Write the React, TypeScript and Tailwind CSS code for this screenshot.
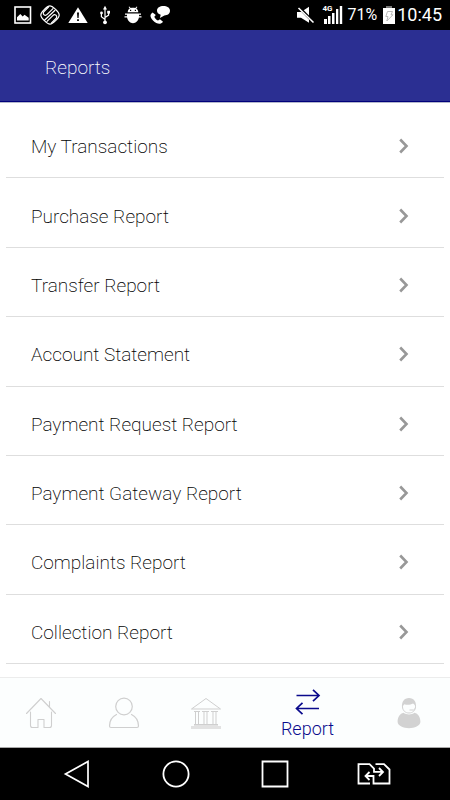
import React, { useState } from 'react';

const reports = [
  'My Transactions',
  'Purchase Report',
  'Transfer Report',
  'Account Statement',
  'Payment Request Report',
  'Payment Gateway Report',
  'Complaints Report',
  'Collection Report',
];

const StatusBar = () => (
  <div className="flex h-[30px] items-center justify-between bg-black pr-2 pl-[14px] text-white">
    <div className="flex items-center">
      {/* Gallery */}
      <svg width="18" height="20" viewBox="0 0 18 20" fill="none">
        <rect x="1" y="2" width="15.5" height="16" stroke="#fff" strokeWidth="1.6" />
        <path d="M3 15.5v-3.2L6.3 9l2.4 2.6 1.8-1.8 4.2 3v2.7z" fill="#fff" />
      </svg>
      {/* Knot badge */}
      <svg className="ml-2" width="20" height="20" viewBox="0 0 20 20" fill="none" stroke="#fff" strokeWidth="1.2" strokeLinecap="round">
        <path d="M10 .8c2.200 0 3.500 1.600 5.600 3.600S19.200 7.800 19.200 10s-1.600 3.700-3.600 5.700-3.400 3.500-5.600 3.500-3.600-1.500-5.600-3.500S.8 12.200.8 10s1.600-3.600 3.600-5.600S7.800.8 10 .8z" />
        <path d="M8.500 2 4 6.500c-1.300 1.300-.8 3.300.7 3.700 1 .3 1.700 0 2.500-.8L13 3.600M14.800 5.500 4.500 15.300M11.500 18l4.500-4.500c1.300-1.300.8-3.300-.7-3.700-1-.3-1.700 0-2.500.8L7 16.400" />
      </svg>
      {/* Warning */}
      <svg className="ml-2" width="20" height="20" viewBox="0 0 20 20">
        <path d="M10 2.300 19.700 18H.3z" fill="#fff" />
        <path d="M9 7.500h2l-.4 5.500H9.400zM9.100 14.200h1.800V16H9.100z" fill="#000" />
      </svg>
      {/* USB */}
      <svg className="ml-3" width="10" height="20" viewBox="0 0 10 20" fill="none" stroke="#fff" strokeWidth="1.200">
        <path d="M5 4v13M5 14.500 1.400 11.800V8.500M5 12.500l3.600-2.400V7.500" />
        <path d="m5 .8 2 3.700H3z" fill="#fff" stroke="none" />
        <circle cx="5" cy="17.300" r="1.900" fill="#fff" stroke="none" />
        <circle cx="1.500" cy="8" r="1.400" fill="#fff" stroke="none" />
        <path d="M7.200 5.800H10v2.800H7.200z" fill="#fff" stroke="none" />
      </svg>
      {/* Debugging */}
      <svg className="ml-[14px]" width="18" height="20" viewBox="0 0 18 20" fill="#fff">
        <path d="M3.700 7.200c.1-1.900 1-3.100 2.100-3.700L4.600 2l.7-.5 1.400 1.600c1.400-.5 3.200-.5 4.600 0l1.400-1.600.7.5-1.200 1.500c1.200.7 2 1.900 2.100 3.700z" />
        <path d="M1 8.500h16v1.300h-2v1.500h2.500v1.200h-2.600c-.6 3.300-3 5.700-5.900 5.700s-5.300-2.400-5.900-5.700H.5v-1.200H3V9.800H1z" />
        <path d="M6 4.800h1.200V6H6zM10.800 4.800H12V6h-1.200z" fill="#000" />
      </svg>
      {/* Call message */}
      <svg className="ml-2" width="20" height="20" viewBox="0 0 20 20" fill="#fff">
        <path d="M2.600 7.500 1.200 8.700C-.3 10.500.6 13 3 15.400S8 19 10 18.700c1.200-.2 2.300-1 3-1.900L10 14.200l-2 1.300c-1.600-.7-3-2.200-3.700-3.800l1.500-1.600z" />
        <path d="M13.400 1C17 1 20 2.600 20 5.700s-2.500 4.500-5.600 4.700L9.900 13l.8-3.300C8.300 9 7 7.700 7 5.700 7 2.600 9.900 1 13.400 1z" />
      </svg>
    </div>

    <div className="flex items-center">
      {/* Muted */}
      <svg width="18" height="20" viewBox="0 0 18 20">
        <path d="M0 7h4l8-5.200v16L4 12.800H0z" fill="#fff" />
        <path d="m1 1.500 16 16" stroke="#000" strokeWidth="3" />
        <path d="m1.500 3 15 14.500" stroke="#fff" strokeWidth="1.600" />
      </svg>
      {/* Signal */}
      <div className="relative ml-2 h-5 w-5">
        <span className="absolute top-0 -left-px text-[8px] leading-[8px] font-bold">4G</span>
        <svg width="20" height="20" viewBox="0 0 20 20" fill="#fff">
          <path d="M1 14h3v5H1zM5 11h2.500v8H5zM9 8h2.500v11H9zM13 4h2.300v15H13zM16.800 1h2.400v18h-2.400z" />
        </svg>
      </div>
      <span className="ml-1 text-[16px] leading-5">71%</span>
      {/* Battery */}
      <svg className="ml-[6px]" width="12" height="20" viewBox="0 0 12 20">
        <path d="M3 1h6v2H3z" fill="#777" />
        <path d="M0 3h12v16H0z" fill="#fff" />
        <path d="M4.500 6.500h5L8 9.800h2L3.800 16l1.200-4.500H2.800z" fill="none" stroke="#aaa" strokeWidth=".8" />
      </svg>
      <span className="ml-[2px] text-[18px] leading-5">10:45</span>
    </div>
  </div>
);

const HomeIcon = () => (
  <svg width="32" height="32" viewBox="0 0 32 32" fill="none" stroke="#cfcfcf" strokeWidth="1.100" strokeLinecap="round" strokeLinejoin="round">
    <path d="M1.500 16.500 16 1.500l14.500 15M24.500 10V4.500M5.500 15v13.500q0 2 2 2H13v-8h6v8h5.500q2 0 2-2V15" />
  </svg>
);

const UserIcon = () => (
  <svg width="32" height="32" viewBox="0 0 32 32" fill="none" stroke="#cfcfcf" strokeWidth="1.200" strokeLinecap="round" strokeLinejoin="round">
    <circle cx="16" cy="9.500" r="8.300" />
    <path d="M8.500 17.500C3.500 20 1.500 25 1.500 29q0 1.500 1.500 1.500h26q1.500 0 1.500-1.500c0-4-2-9-7-11.500" />
  </svg>
);

const BankIcon = () => (
  <svg width="32" height="32" viewBox="0 0 32 32" fill="none" stroke="#cfcfcf" strokeWidth="1">
    <path d="M16 1.500 30.500 12h-29z" />
    <path d="M4 14.500h6M12 14.500h7M21 14.500h7M5.500 14.500V27M8.500 14.500V27M14 14.500V27M17 14.500V27M23 14.500V27M26 14.500V27" />
    <path d="M4 27h24v2h3v3H1v-3h3z" fill="#e2e2e2" stroke="none" />
    <path d="M4 27.500h24" />
  </svg>
);

const SwapIcon = () => (
  <svg width="26" height="26" viewBox="0 0 26 26" fill="none" stroke="#0a0a8c" strokeWidth="1.700">
    <path d="M1.500 6.500h22.500M18 .8l6 5.700-6 5.700M24 19.500H1.500M7.500 13.800l-6 5.700 6 5.700" />
  </svg>
);

const SupportIcon = () => (
  <svg width="32" height="32" viewBox="0 0 32 32" fill="#d2d2d2">
    <path d="M9 10.500C8.500 5 11 1 16 1s7.500 4 7 9.500l-.7 1c0-3-.5-4.200-2.300-5-2.500 1.500-6.500 1.600-8.500.7-1.400 1-1.800 2.300-1.800 4.300z" />
    <path d="M9.500 9.500c0 4 2.800 6.500 6.500 6.500s6.500-2.500 6.500-6.500M16.500 13h4l1.700-1.500" fill="none" stroke="#d2d2d2" strokeWidth="1" />
    <path d="M10.500 15.800c1.500 1.100 3.300 1.600 5.500 1.600s4-.5 5.500-1.600c3.500.7 5.900 4.500 5.900 9 0 4.200-6 6.400-11.400 6.400S4.600 29 4.600 24.800c0-4.500 2.400-8.300 5.900-9z" />
  </svg>
);

const tabs = [
  { id: 'home', label: 'Home', icon: <HomeIcon /> },
  { id: 'profile', label: 'Profile', icon: <UserIcon /> },
  { id: 'bank', label: 'Bank', icon: <BankIcon /> },
  { id: 'report', label: 'Report', icon: <SwapIcon /> },
  { id: 'support', label: 'Support', icon: <SupportIcon /> },
];

const SystemNav = () => (
  <div className="grid h-[52px] grid-cols-4 bg-black px-[27px]">
    <button type="button" aria-label="Back" className="flex items-center justify-center">
      <svg width="28" height="28" viewBox="0 0 28 28" fill="none" stroke="#fff" strokeWidth="1.700">
        <path d="M25 1.500v25L2.500 14z" />
      </svg>
    </button>
    <button type="button" aria-label="Home screen" className="flex items-center justify-center">
      <svg width="28" height="28" viewBox="0 0 28 28" fill="none" stroke="#fff" strokeWidth="1.800">
        <circle cx="14" cy="14" r="12.600" />
      </svg>
    </button>
    <button type="button" aria-label="Recent apps" className="flex items-center justify-center">
      <svg width="28" height="28" viewBox="0 0 28 28" fill="none" stroke="#fff" strokeWidth="1.800">
        <path d="M1.500 1.500h25v25h-25z" />
      </svg>
    </button>
    <button type="button" aria-label="Switch SIM" className="flex items-center justify-center">
      <svg width="34" height="28" viewBox="0 0 34 28" fill="none" stroke="#fff" strokeWidth="1.800">
        <path d="M13 23.500H1.500V4.200h11l4.500 4.500v3.200h8.500M22 8l4 4-4 4" />
        <path d="M18.500 4.200h8.500l5.500 5.300v14H16.500V16H9M12.500 12l-4 4 4 4" />
      </svg>
    </button>
  </div>
);

const App = () => {
  const [activeTab, setActiveTab] = useState('report');

  return (
    <div className="flex min-h-screen flex-col bg-white font-[Roboto,sans-serif]">
      <StatusBar />

      <header className="flex h-[72px] items-center border-b border-[#00007a] bg-[#2b2f92] px-[45px] shadow-[0_1px_0_#b4b8cc]">
        <h1 className="pt-1 text-[19px] leading-6 font-extralight text-white">Reports</h1>
      </header>

      <main className="flex flex-1 flex-col px-[6px] pt-[7px] pb-[13px]">
        <ul className="flex flex-1 flex-col">
          {reports.map((report) => (
            <li key={report} className="flex flex-1 border-b border-[#dedede]">
              <a href="#" className="flex flex-1 items-center justify-between pt-[6px] pr-[34px] pl-[25px]">
                <span className="pt-[2px] text-[19px] leading-6 font-extralight text-black">{report}</span>
                <svg width="12" height="16" viewBox="0 0 12 16" fill="none" stroke="#989898" strokeWidth="2.600">
                  <path d="m2.200 1.500 6.300 6.500-6.300 6.500" />
                </svg>
              </a>
            </li>
          ))}
        </ul>
      </main>

      <nav className="flex h-[71px] border-t border-b border-t-[#ececec] border-b-[#a8a8a8] bg-[#fcfefe]">
        {tabs.map((tab) => (
          <button
            key={tab.id}
            type="button"
            aria-label={tab.label}
            onClick={() => setActiveTab(tab.id)}
            className={
              activeTab === tab.id
                ? 'flex w-[120px] flex-col items-center justify-center gap-[2px] pt-1 text-[#0a0a8c]'
                : 'flex flex-1 items-center justify-center'
            }
          >
            {tab.icon}
            {activeTab === tab.id && <span className="text-[18px] leading-6 font-light">{tab.label}</span>}
          </button>
        ))}
      </nav>

      <SystemNav />
    </div>
  );
};

export default App;
